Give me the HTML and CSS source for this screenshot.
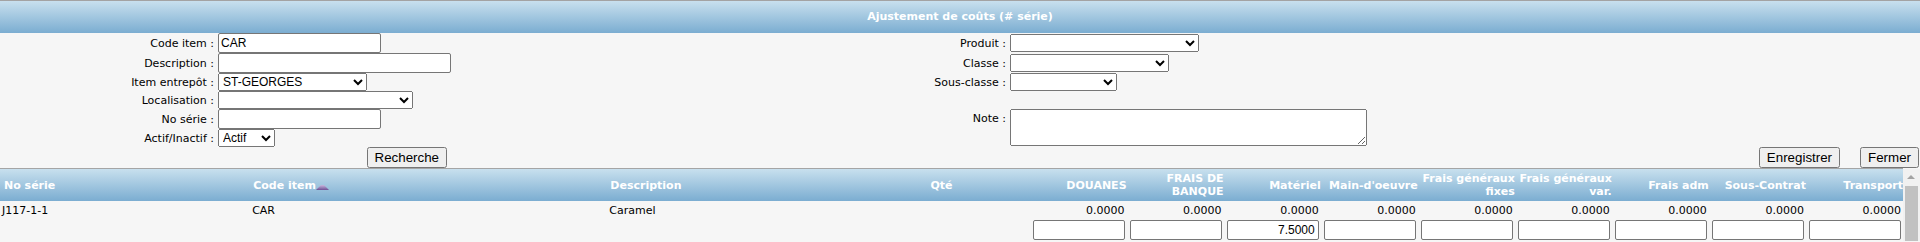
FILE: index.html
```html
<!DOCTYPE html>
<html lang="fr">
<head>
    <meta charset="UTF-8">
    <title>Ajustement de coûts (# série)</title>
    <link rel="stylesheet" href="styles.css">
</head>
<body>
    <div class="page-title">Ajustement de coûts (# série)</div>

    <form class="search-form">
        <label class="field-label">Code item :</label>
        <input type="text" class="text-input w-code" value="CAR">
        <label class="field-label">Produit :</label>
        <select class="w-produit"><option></option></select>

        <label class="field-label">Description :</label>
        <input type="text" class="text-input w-desc">
        <label class="field-label">Classe :</label>
        <select class="w-classe"><option></option></select>

        <label class="field-label">Item entrepôt :</label>
        <select class="w-entrepot"><option>ST-GEORGES</option></select>
        <label class="field-label">Sous-classe :</label>
        <select class="w-sousclasse"><option></option></select>

        <label class="field-label">Localisation :</label>
        <select class="w-local"><option></option></select>
        <span></span>
        <span></span>

        <label class="field-label">No série :</label>
        <input type="text" class="text-input w-code">
        <label class="field-label top">Note :</label>
        <textarea class="note-input"></textarea>

        <label class="field-label">Actif/Inactif :</label>
        <select class="w-actif"><option>Actif</option></select>
        <span></span>

        <span></span>
        <button type="button" class="search-button">Recherche</button>
        <span></span>
        <div class="form-actions">
            <button type="button">Enregistrer</button>
            <button type="button">Fermer</button>
        </div>
    </form>

    <div class="results">
        <div class="results-table">
            <table class="grid">
                <colgroup>
                    <col class="col-serie">
                    <col class="col-item">
                    <col class="col-desc">
                    <col class="col-qte">
                    <col class="col-cost">
                    <col class="col-cost">
                    <col class="col-cost">
                    <col class="col-cost">
                    <col class="col-cost">
                    <col class="col-cost">
                    <col class="col-cost">
                    <col class="col-cost">
                    <col class="col-cost">
                </colgroup>
                <thead>
                    <tr>
                        <th>No série</th>
                        <th>Code item<svg class="sort-arrow" width="13" height="6" viewBox="0 0 13 6"><defs><linearGradient id="sortfill" x1="0" y1="0" x2="0" y2="1"><stop offset="0" stop-color="#c9b8de"/><stop offset="1" stop-color="#6e5095"/></linearGradient></defs><polygon points="0,6 5,1 8,1 13,6" fill="url(#sortfill)"/></svg></th>
                        <th>Description</th>
                        <th>Qté</th>
                        <th class="num">DOUANES</th>
                        <th class="num">FRAIS DE BANQUE</th>
                        <th class="num">Matériel</th>
                        <th class="num">Main-d'oeuvre</th>
                        <th class="num">Frais généraux fixes</th>
                        <th class="num">Frais généraux var.</th>
                        <th class="num">Frais adm</th>
                        <th class="num">Sous-Contrat</th>
                        <th class="num">Transport</th>
                    </tr>
                </thead>
                <tbody>
                    <tr>
                        <td class="first">J117-1-1</td>
                        <td>CAR</td>
                        <td>Caramel</td>
                        <td></td>
                        <td class="num">0.0000</td>
                        <td class="num">0.0000</td>
                        <td class="num">0.0000</td>
                        <td class="num">0.0000</td>
                        <td class="num">0.0000</td>
                        <td class="num">0.0000</td>
                        <td class="num">0.0000</td>
                        <td class="num">0.0000</td>
                        <td class="num">0.0000</td>
                    </tr>
                    <tr class="cost-row">
                        <td></td>
                        <td></td>
                        <td></td>
                        <td></td>
                        <td class="num"><input type="text" class="cost-input"></td>
                        <td class="num"><input type="text" class="cost-input"></td>
                        <td class="num"><input type="text" class="cost-input" value="7.5000"></td>
                        <td class="num"><input type="text" class="cost-input"></td>
                        <td class="num"><input type="text" class="cost-input"></td>
                        <td class="num"><input type="text" class="cost-input"></td>
                        <td class="num"><input type="text" class="cost-input"></td>
                        <td class="num"><input type="text" class="cost-input"></td>
                        <td class="num"><input type="text" class="cost-input"></td>
                    </tr>
                </tbody>
            </table>
        </div>
        <div class="scrollbar">
            <div class="scroll-up"></div>
            <div class="scroll-thumb"></div>
        </div>
    </div>
</body>
</html>
```

FILE: styles.css
```css
* {
    box-sizing: border-box;
}

body {
    margin: 0;
    background: #f6f6f6;
    font-family: "DejaVu Sans", Verdana, sans-serif;
    font-size: 11px;
    color: #000;
    overflow: hidden;
}

.page-title {
    height: 33px;
    border-top: 1px solid #a3a3a3;
    background: linear-gradient(#c8e0ee, #7badd1);
    color: #fff;
    font-weight: bold;
    line-height: 32px;
    text-align: center;
}

/* search form */
.search-form {
    display: grid;
    grid-template-columns: 214px 233px 551px 1fr;
    grid-template-rows: 20px 20px 18px 18px 20px 18px 21px;
    column-gap: 4px;
}

.field-label {
    text-align: right;
    align-self: center;
    white-space: nowrap;
}

.field-label.top {
    align-self: start;
    padding-top: 3px;
}

input,
select,
textarea,
button {
    font-family: "Liberation Sans", Arial, sans-serif;
    margin: 0;
}

.text-input {
    height: 20px;
    font-size: 12px;
    padding: 1px 2px;
    border: 1px solid #767676;
    border-radius: 2px;
    background: #fff;
    align-self: center;
    justify-self: start;
}

select {
    height: 18px;
    font-size: 12px;
    align-self: center;
    justify-self: start;
}

.w-code { width: 163px; }
.w-desc { width: 233px; }
.w-entrepot { width: 149px; }
.w-local { width: 195px; }
.w-actif { width: 57px; }
.w-produit { width: 189px; }
.w-classe { width: 159px; }
.w-sousclasse { width: 107px; }

.note-input {
    grid-row: span 2;
    width: 357px;
    height: 37px;
    font-size: 12px;
    align-self: start;
    justify-self: start;
}

button {
    font-size: 13.333px;
}

.search-button {
    justify-self: end;
    align-self: start;
    margin-right: 4px;
}

.form-actions {
    justify-self: end;
    align-self: start;
    display: flex;
    gap: 20px;
    margin-right: 1px;
}

/* results grid */
.results {
    display: flex;
}

.results-table {
    flex: 1;
    border-top: 1px solid #a5a5a5;
    overflow: hidden;
}

.grid {
    width: 100%;
    border-collapse: collapse;
    table-layout: fixed;
}

.col-serie { width: 249px; }
.col-item { width: 357px; }
.col-desc { width: 320px; }
.col-qte { width: 103px; }
.col-cost { width: 97px; }

.grid th {
    height: 32px;
    padding: 0 0 0 4px;
    background: linear-gradient(#c8e0ee, #7badd1);
    color: #fff;
    font-weight: bold;
    line-height: 13px;
    text-align: left;
    vertical-align: middle;
}

.grid th.num {
    text-align: right;
    padding: 0;
}

.sort-arrow {
    vertical-align: -1px;
}

.grid td {
    height: 18px;
    padding: 0 2px 0 3px;
    white-space: nowrap;
    vertical-align: middle;
}

.grid td.first {
    padding-left: 2px;
}

.grid td.num {
    text-align: right;
}

.cost-row td {
    height: 22px;
}

.cost-input {
    display: inline-block;
    vertical-align: middle;
    width: 92px;
    height: 20px;
    font-size: 12px;
    text-align: right;
    padding: 1px 3px;
    border: 1px solid #767676;
    border-radius: 2px;
    background: #fff;
}

/* fake scrollbar */
.scrollbar {
    width: 17px;
    margin-top: 1px;
    background: #f1f1f1;
    display: flex;
    flex-direction: column;
}

.scroll-up {
    height: 17px;
    position: relative;
}

.scroll-up::after {
    content: "";
    position: absolute;
    left: 4px;
    top: 6px;
    border-left: 4px solid transparent;
    border-right: 4px solid transparent;
    border-bottom: 4px solid #a3a3a3;
}

.scroll-thumb {
    flex: 1;
    margin: 0 2px;
    background: #c1c1c1;
}
```
